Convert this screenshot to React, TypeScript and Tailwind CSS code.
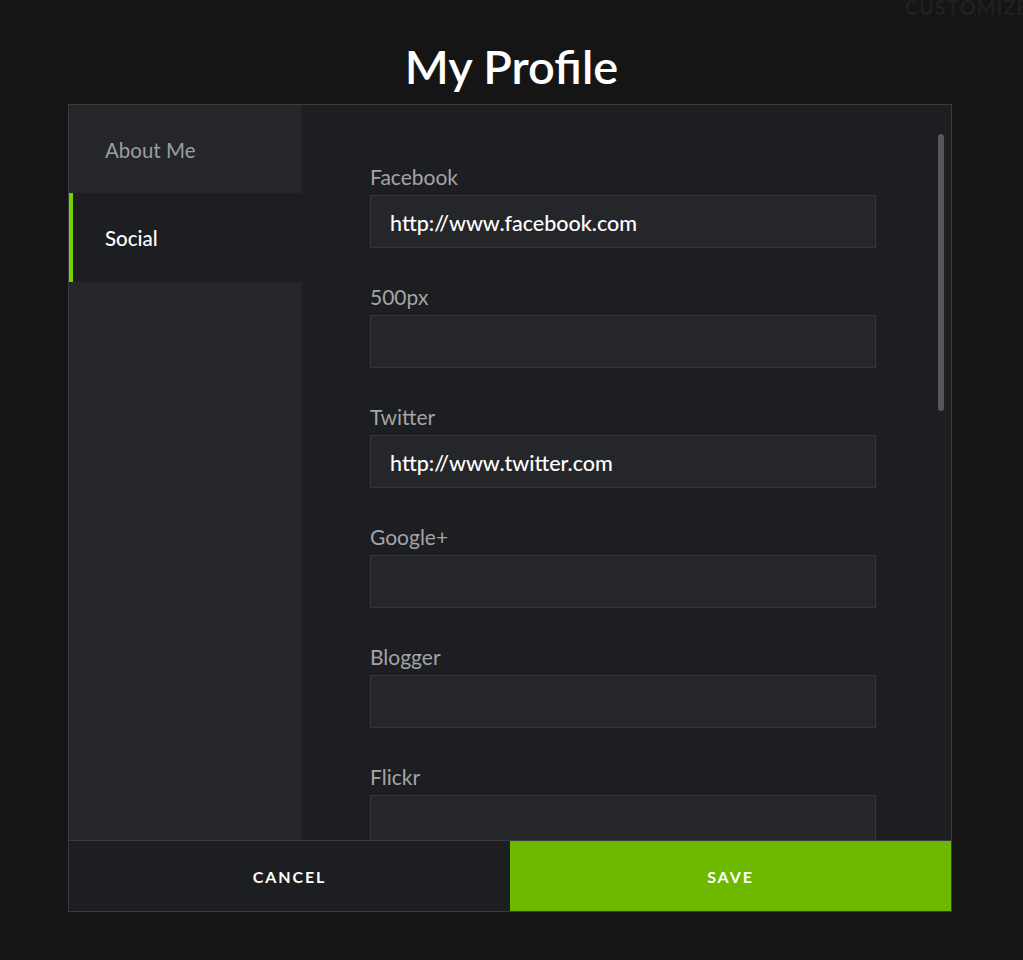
import React from "react";

const fields: { label: string; value: string }[] = [
  { label: "Facebook", value: "http://www.facebook.com" },
  { label: "500px", value: "" },
  { label: "Twitter", value: "http://www.twitter.com" },
  { label: "Google+", value: "" },
  { label: "Blogger", value: "" },
  { label: "Flickr", value: "" },
];

export default function App() {
  return (
    <div
      className="relative h-[960px] w-full overflow-hidden bg-[#151516] text-white"
      style={{ fontFamily: "Lato, 'Open Sans', sans-serif" }}
    >
      <div className="absolute right-[-6px] top-[-8px] text-[20px] font-bold tracking-wider text-[#1f2022]">
        CUSTOMIZE
      </div>
      <h1 className="pt-[37px] text-center text-[47px] font-semibold leading-[58px] text-white">
        My Profile
      </h1>
      <div className="ml-[68px] mt-[9px] flex h-[808px] w-[884px] flex-col border border-[#3b3c40] bg-[#1d1e21]">
        <div className="flex min-h-0 flex-1">
          <div className="flex w-[233px] flex-col bg-[#25262a]">
            <div className="flex h-[88px] items-center pl-[36px] pt-[2px] text-[20.5px] text-[#9c9da1]">
              About Me
            </div>
            <div className="flex h-[89px] items-center border-l-[4px] border-[#76d100] bg-[#1d1e21] pl-[32px] pt-[2px] text-[20.5px] font-medium text-white">
              Social
            </div>
          </div>
          <div className="relative flex-1 overflow-hidden">
            <div className="flex flex-col gap-[37px] pl-[68px] pt-[60px]">
              {fields.map((f) => (
                <div key={f.label} className="flex flex-col">
                  <div className="h-[30px] text-[21px] leading-[24px] text-[#a3a4a8]">{f.label}</div>
                  <div className="flex h-[53px] w-[506px] items-center border border-[#34353a] bg-[#25262a] pl-[19px] pt-[3px] text-[21.5px] font-medium text-white">
                    {f.value}
                  </div>
                </div>
              ))}
            </div>
            <div className="absolute right-[7px] top-[29px] h-[277px] w-[6px] rounded-full bg-[#55575d]" />
          </div>
        </div>
        <div className="flex h-[71px] border-t border-[#3b3c40]">
          <button className="flex flex-1 items-center justify-center bg-[#1d1e21] pt-[2px] text-[16px] font-bold tracking-[0.12em] text-white">
            CANCEL
          </button>
          <button className="flex flex-1 items-center justify-center bg-[#6fb800] pt-[2px] text-[16px] font-bold tracking-[0.12em] text-white">
            SAVE
          </button>
        </div>
      </div>
    </div>
  );
}
